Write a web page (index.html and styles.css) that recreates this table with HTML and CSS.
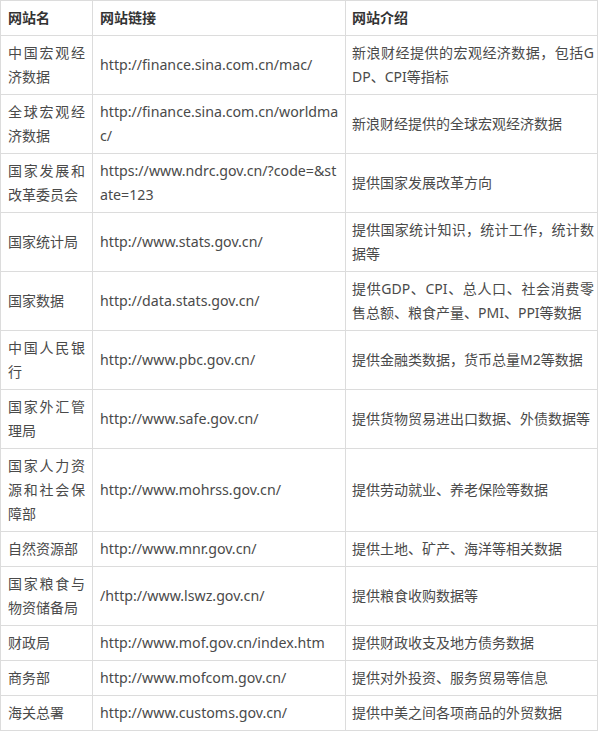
FILE: index.html
```html
<!DOCTYPE html>
<html lang="zh-CN">
<head>
    <meta charset="UTF-8">
    <meta name="viewport" content="width=device-width, initial-scale=1.0">
    <title>宏观经济数据网站</title>
    <link rel="stylesheet" href="styles.css">
</head>
<body>
    <table class="site-table">
        <colgroup>
            <col class="col-name">
            <col class="col-link">
            <col class="col-desc">
        </colgroup>
        <thead>
            <tr>
                <th>网站名</th>
                <th>网站链接</th>
                <th class="desc">网站介绍</th>
            </tr>
        </thead>
        <tbody>
            <tr>
                <td>中国宏观经济数据</td>
                <td class="link">http://finance.sina.com.cn/mac/</td>
                <td class="desc">新浪财经提供的宏观经济数据，包括GDP、CPI等指标</td>
            </tr>
            <tr>
                <td>全球宏观经济数据</td>
                <td class="link">http://finance.sina.com.cn/worldmac/</td>
                <td class="desc">新浪财经提供的全球宏观经济数据</td>
            </tr>
            <tr>
                <td>国家发展和改革委员会</td>
                <td class="link">https://www.ndrc.gov.cn/?code=&amp;state=123</td>
                <td class="desc">提供国家发展改革方向</td>
            </tr>
            <tr>
                <td>国家统计局</td>
                <td class="link">http://www.stats.gov.cn/</td>
                <td class="desc">提供国家统计知识，统计工作，统计数据等</td>
            </tr>
            <tr>
                <td>国家数据</td>
                <td class="link">http://data.stats.gov.cn/</td>
                <td class="desc">提供GDP、CPI、总人口、社会消费零售总额、粮食产量、PMI、PPI等数据</td>
            </tr>
            <tr>
                <td>中国人民银行</td>
                <td class="link">http://www.pbc.gov.cn/</td>
                <td class="desc">提供金融类数据，货币总量M2等数据</td>
            </tr>
            <tr>
                <td>国家外汇管理局</td>
                <td class="link">http://www.safe.gov.cn/</td>
                <td class="desc">提供货物贸易进出口数据、外债数据等</td>
            </tr>
            <tr>
                <td>国家人力资源和社会保障部</td>
                <td class="link">http://www.mohrss.gov.cn/</td>
                <td class="desc">提供劳动就业、养老保险等数据</td>
            </tr>
            <tr>
                <td>自然资源部</td>
                <td class="link">http://www.mnr.gov.cn/</td>
                <td class="desc">提供土地、矿产、海洋等相关数据</td>
            </tr>
            <tr>
                <td>国家粮食与物资储备局</td>
                <td class="link">/http://www.lswz.gov.cn/</td>
                <td class="desc">提供粮食收购数据等</td>
            </tr>
            <tr>
                <td>财政局</td>
                <td class="link">http://www.mof.gov.cn/index.htm</td>
                <td class="desc">提供财政收支及地方债务数据</td>
            </tr>
            <tr>
                <td>商务部</td>
                <td class="link">http://www.mofcom.gov.cn/</td>
                <td class="desc">提供对外投资、服务贸易等信息</td>
            </tr>
            <tr>
                <td>海关总署</td>
                <td class="link">http://www.customs.gov.cn/</td>
                <td class="desc">提供中美之间各项商品的外贸数据</td>
            </tr>
        </tbody>
    </table>
</body>
</html>
```

FILE: styles.css
```css
html, body {
    margin: 0;
    padding: 0;
    background: #fff;
}

body {
    font-family: "Noto Sans", "Noto Sans CJK SC", sans-serif;
    font-size: 14px;
    color: #4a4a4a;
}

.site-table {
    width: 597px;
    border-collapse: collapse;
    table-layout: fixed;
}

.col-name { width: 92px; }
.col-link { width: 253px; }
.col-desc { width: 252px; }

.site-table th,
.site-table td {
    border: 1px solid #dcdcdc;
    padding: 5px 7px;
    line-height: 24px;
    text-align: justify;
    vertical-align: middle;
    word-break: break-all;
}

.site-table th {
    font-weight: bold;
    color: #333;
}

.site-table td.link {
    font-size: 14.2px;
    text-align: left;
    padding-right: 6px;
}

.site-table .desc {
    padding-left: 6px;
    padding-right: 3px;
}
```
